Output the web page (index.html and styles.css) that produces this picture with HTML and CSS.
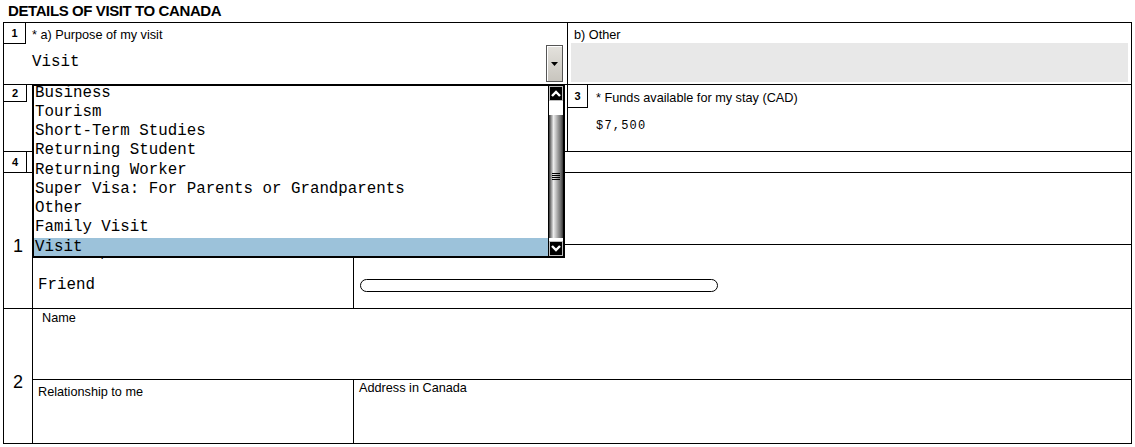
FILE: index.html
```html
<!DOCTYPE html>
<html lang="en">
<head>
    <meta charset="UTF-8">
    <meta name="viewport" content="width=device-width, initial-scale=1.0">
    <title>Details of Visit to Canada</title>
    <link rel="stylesheet" href="styles.css">
</head>
<body>
    <h1 class="title">DETAILS OF VISIT TO CANADA</h1>

    <div class="form">
        <!-- Purpose of visit -->
        <div class="row row-top">
            <div class="cell purpose">
                <div class="head">
                    <span class="num num-1">1</span>
                    <span class="label">* a) Purpose of my visit</span>
                </div>
                <div class="select">
                    <span class="value">Visit</span>
                    <span class="drop-btn">
                        <svg width="7" height="4" viewBox="0 0 7 4"><path d="M0 0H7L3.5 4Z" fill="#000"/></svg>
                    </span>
                </div>

                <!-- Open dropdown list -->
                <div class="listbox">
                    <ul class="options">
                        <li>Business</li>
                        <li>Tourism</li>
                        <li>Short-Term Studies</li>
                        <li>Returning Student</li>
                        <li>Returning Worker</li>
                        <li>Super Visa: For Parents or Grandparents</li>
                        <li>Other</li>
                        <li>Family Visit</li>
                        <li class="selected">Visit</li>
                    </ul>
                    <div class="scrollbar">
                        <span class="scroll-btn">
                            <svg width="10" height="7" viewBox="0 0 10 7"><path d="M1 6L5 2L9 6" fill="none" stroke="#fff" stroke-width="2.4"/></svg>
                        </span>
                        <div class="track">
                            <div class="thumb"><span class="grip"></span></div>
                        </div>
                        <span class="scroll-btn">
                            <svg width="10" height="7" viewBox="0 0 10 7"><path d="M1 1L5 5L9 1" fill="none" stroke="#fff" stroke-width="2.4"/></svg>
                        </span>
                    </div>
                </div>
            </div>
            <div class="cell other">
                <div class="label">b) Other</div>
                <div class="grey-field"></div>
            </div>
        </div>

        <!-- Duration and funds -->
        <div class="row row-mid">
            <div class="cell stay">
                <span class="num num-2">2</span>
            </div>
            <div class="cell funds">
                <div class="head">
                    <span class="num num-3">3</span>
                    <span class="label">* Funds available for my stay (CAD)</span>
                </div>
                <div class="amount">$7,500</div>
            </div>
        </div>

        <div class="row row-four">
            <span class="num num-4">4</span>
        </div>

        <!-- Person 1 -->
        <div class="person person-1">
            <div class="person-num">1</div>
            <div class="person-body">
                <div class="sub-name">
                    <div class="label">Name</div>
                </div>
                <div class="sub-bottom">
                    <div class="rel">
                        <div class="label">Relationship to me</div>
                        <div class="person-value">Friend</div>
                    </div>
                    <div class="addr">
                        <div class="label">Address in Canada</div>
                        <div class="oval"></div>
                    </div>
                </div>
            </div>
        </div>

        <!-- Person 2 -->
        <div class="person person-2">
            <div class="person-num">2</div>
            <div class="person-body">
                <div class="sub-name">
                    <div class="label">Name</div>
                </div>
                <div class="sub-bottom">
                    <div class="rel">
                        <div class="label">Relationship to me</div>
                    </div>
                    <div class="addr">
                        <div class="label">Address in Canada</div>
                    </div>
                </div>
            </div>
        </div>
    </div>
</body>
</html>
```

FILE: styles.css
```css
* {
    margin: 0;
    padding: 0;
    box-sizing: border-box;
}
body {
    font-family: 'Liberation Sans', Arial, sans-serif;
    background-color: #fff;
    color: #000;
}
.title {
    font-size: 15px;
    font-weight: bold;
    letter-spacing: -0.4px;
    line-height: 16px;
    height: 22px;
    padding: 3px 0 0 8px;
}
.form {
    margin-left: 3px;
    width: 1129px;
    border: 1px solid #000;
}
.row {
    display: flex;
    border-bottom: 1px solid #000;
}
.row-top {
    height: 62px;
}
.row-mid {
    height: 67px;
}
.row-four {
    height: 21px;
}
.cell {
    position: relative;
}
.label {
    font-size: 12.7px;
    line-height: 14px;
    white-space: nowrap;
}
.head {
    display: flex;
    align-items: flex-start;
}
.num {
    display: flex;
    justify-content: center;
    align-items: center;
    border-right: 1px solid #000;
    border-bottom: 1px solid #000;
    font-size: 11px;
    font-weight: bold;
}
.num-1 {
    width: 22px;
    height: 21px;
}
.num-2 {
    width: 23px;
    height: 17px;
}
.num-3 {
    width: 20px;
    height: 23px;
}
.num-4 {
    width: 23px;
    height: 100%;
    border-bottom: none;
}

/* purpose select */
.purpose {
    width: 564px;
    border-right: 1px solid #000;
}
.purpose .head .label {
    margin: 5px 0 0 6px;
}
.select {
    display: flex;
    align-items: flex-start;
    margin-top: 1px;
    padding-left: 28px;
}
.value, .person-value, .options {
    font-family: 'Liberation Mono', 'Courier New', monospace;
    font-size: 15.8px;
    line-height: 19px;
}
.value {
    margin-top: 8px;
}
.drop-btn {
    display: flex;
    justify-content: center;
    align-items: center;
    width: 17px;
    height: 37px;
    margin-left: auto;
    margin-right: 4px;
    background: linear-gradient(#e4e2dd, #c8c5be);
    border: 1px solid #555;
    box-shadow: inset 1px 1px 0 #fff;
}

/* open list */
.listbox {
    position: absolute;
    left: 28px;
    top: 61px;
    z-index: 5;
    display: flex;
    width: 533px;
    height: 174px;
    border: 2px solid #000;
    background-color: #fff;
}
.options {
    flex: 1;
    list-style: none;
    overflow: hidden;
}
.options li {
    height: 19.25px;
    line-height: 19.25px;
    padding-left: 1px;
    white-space: nowrap;
}
.options li:first-child {
    margin-top: -2.5px;
}
.options li.selected {
    background-color: #9cc2da;
}
.scrollbar {
    display: flex;
    flex-direction: column;
    width: 15px;
    border-left: 1px solid #000;
}
.scroll-btn {
    display: flex;
    justify-content: center;
    align-items: center;
    height: 15px;
    background-color: #000;
    border: 1px solid #bdbdbd;
}
.track {
    flex: 1;
    padding: 14px 0 3px;
}
.thumb {
    display: flex;
    justify-content: center;
    align-items: center;
    height: 100%;
    background: linear-gradient(to right, #333 0%, #8a8a8a 14%, #ececec 32%, #c6c6c6 48%, #999 66%, #6a6a6a 86%, #333 100%);
}
.grip {
    width: 8px;
    height: 7px;
    background: repeating-linear-gradient(#000 0 1px, transparent 1px 2px);
}

/* other */
.other {
    flex: 1;
    padding: 5px 3px 0;
}
.other .label {
    height: 15px;
    margin-left: 3px;
}
.grey-field {
    height: 39px;
    background-color: #e8e8e8;
}

/* stay / funds */
.stay {
    width: 564px;
    border-right: 1px solid #000;
}
.funds {
    flex: 1;
}
.funds .head .label {
    margin: 6px 0 0 8px;
}
.amount {
    margin: 11px 0 0 28px;
    font-family: 'Liberation Mono', 'Courier New', monospace;
    font-size: 12px;
    line-height: 14px;
    letter-spacing: 1.2px;
}

/* people */
.person {
    display: flex;
}
.person-1 {
    height: 136px;
    border-bottom: 1px solid #000;
}
.person-2 {
    height: 134px;
}
.person-num {
    display: flex;
    justify-content: center;
    align-items: center;
    width: 29px;
    padding-top: 12px;
    border-right: 1px solid #000;
    font-size: 18px;
}
.person-body {
    flex: 1;
    display: flex;
    flex-direction: column;
}
.person-1 .sub-name {
    height: 72px;
}
.person-2 .sub-name {
    height: 71px;
}
.sub-name {
    border-bottom: 1px solid #000;
}
.sub-name .label {
    padding: 2px 0 0 9px;
}
.sub-bottom {
    flex: 1;
    display: flex;
}
.rel {
    width: 321px;
    border-right: 1px solid #000;
}
.rel .label {
    padding: 5px 0 0 5px;
}
.person-1 .rel .label {
    padding-top: 0;
}
.person-value {
    margin: 17px 0 0 5px;
}
.addr {
    flex: 1;
}
.addr .label {
    padding: 1px 0 0 5px;
}
.oval {
    width: 358px;
    height: 13px;
    margin: 19px 0 0 6px;
    border: 1px solid #000;
    border-radius: 7px;
}
```
